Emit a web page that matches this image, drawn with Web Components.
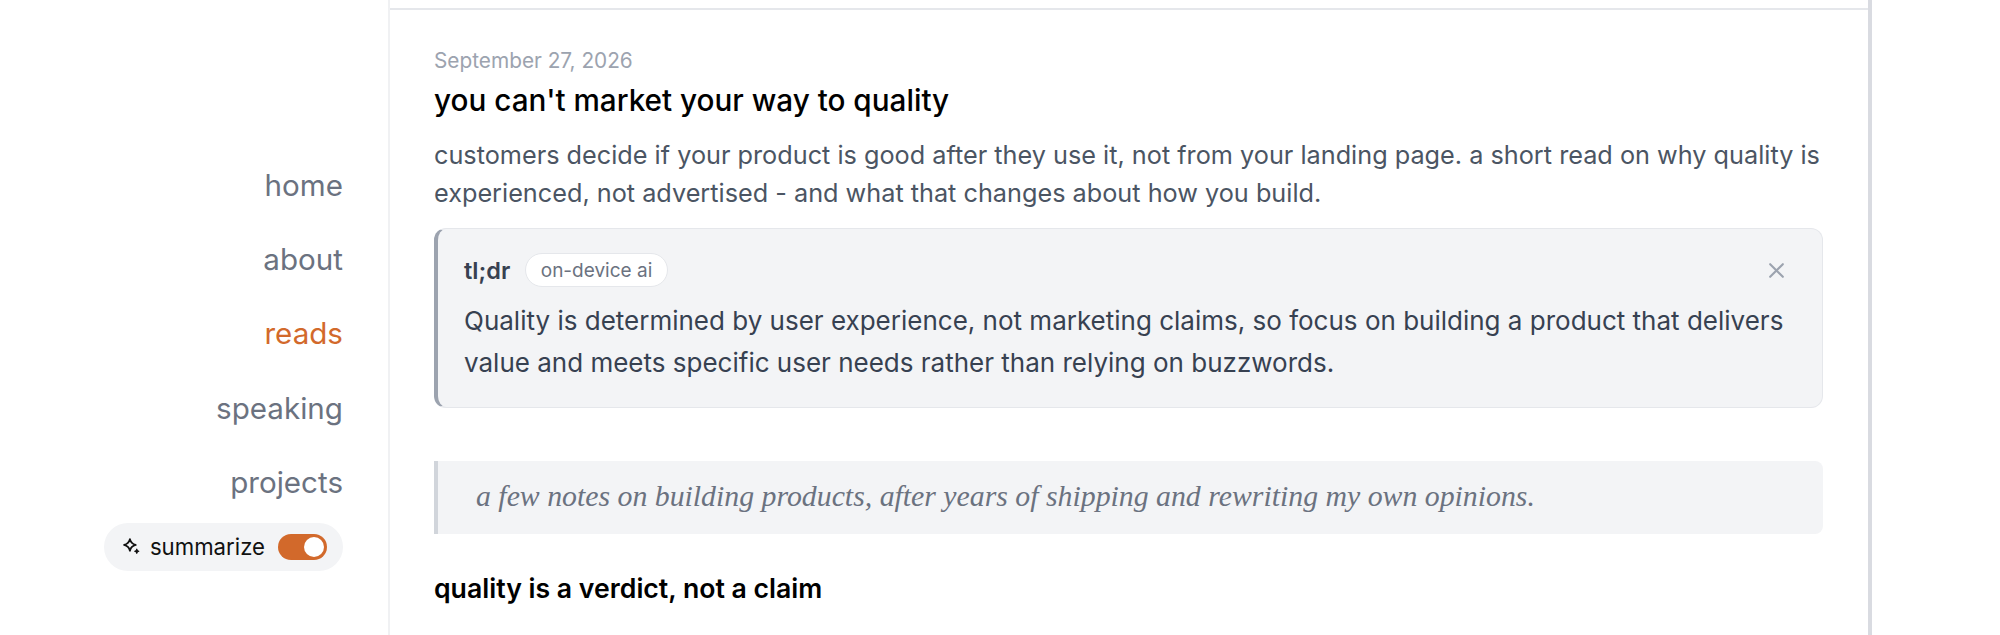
<!DOCTYPE html>
<html lang="en">
<head>
<meta charset="utf-8">
<title>you can't market your way to quality</title>
<style>
  html, body { margin: 0; height: 100%; background: #fff; overflow: hidden; }
  body { font-family: Inter, "Liberation Sans", sans-serif; }
</style>
</head>
<body>
<blog-page>
  <side-nav slot="side">
    <nav-link>home</nav-link>
    <nav-link>about</nav-link>
    <nav-link active>reads</nav-link>
    <nav-link>speaking</nav-link>
    <nav-link>projects</nav-link>
    <summarize-toggle>summarize</summarize-toggle>
  </side-nav>
  <post-header date="September 27, 2026" title="you can't market your way to quality">customers decide if your product is good after they use it, not from your landing page. a short read on why quality is experienced, not advertised - and what that changes about how you build.</post-header>
  <tldr-card>Quality is determined by user experience, not marketing claims, so focus on building a product that delivers value and meets specific user needs rather than relying on buzzwords.</tldr-card>
  <pull-quote>a few notes on building products, after years of shipping and rewriting my own opinions.</pull-quote>
  <section-heading>quality is a verdict, not a claim</section-heading>
</blog-page>

<script>
// small helper so each component is just a template + a class
function component(name, html, setup) {
  const template = document.createElement('template');
  template.innerHTML = html;
  customElements.define(name, class extends HTMLElement {
    connectedCallback() {
      if (this.shadowRoot) return;
      const root = this.attachShadow({ mode: 'open' });
      root.appendChild(template.content.cloneNode(true));
      if (setup) setup(root, this);
    }
  });
}

component('blog-page', `
  <style>
    :host { display: grid; grid-template-columns: 388px 1484px 1fr; height: 635px; }
    aside { display: flex; flex-direction: column; align-items: flex-end; padding: 162px 45px 0 0; }
    main { border-left: 2px solid #f0f1f3; border-right: 4px solid #d9dbe1; overflow: hidden; }
    .rule { height: 8px; border-bottom: 2px solid #e5e7eb; }
    .content { padding: 38px 45px 0 44px; display: flex; flex-direction: column; }
  </style>
  <aside><slot name="side"></slot></aside>
  <main>
    <div class="rule"></div>
    <div class="content"><slot></slot></div>
  </main>
  <div></div>
`);

component('side-nav', `
  <style>
    :host { display: flex; flex-direction: column; align-items: flex-end; gap: 0; }
  </style>
  <slot></slot>
`);

component('nav-link', `
  <style>
    :host { display: block; font-size: 29.6px; line-height: 46px; margin-bottom: 28.2px; color: #6b7280; }
    :host([active]) { color: #d2692b; }
    a { color: inherit; text-decoration: none; }
  </style>
  <a href="#"><slot></slot></a>
`);

component('summarize-toggle', `
  <style>
    :host { display: flex; align-items: center; height: 48px; padding: 0 16px 0 18px; margin-top: -10px;
      background: #f3f4f6; border-radius: 24px; font-size: 22.2px; color: #111; }
    svg { width: 19px; height: 19px; margin-right: 9px; }
    .track { width: 49px; height: 26px; margin-left: 13px; border-radius: 13px; background: #d2692b;
      display: flex; align-items: center; justify-content: flex-end; padding-right: 3px; box-sizing: border-box; }
    .knob { width: 20px; height: 20px; border-radius: 50%; background: #fff; }
  </style>
  <svg viewBox="0 0 18 18" fill="none" stroke="#111" stroke-width="1.7" stroke-linejoin="round">
    <path d="M7.500 2c.8 3.300 2.200 4.700 5.500 5.500-3.300.8-4.700 2.200-5.500 5.500-.8-3.300-2.200-4.700-5.500-5.500 3.300-.8 4.700-2.200 5.500-5.500z"/>
    <path d="M14 11.500c.2 1.200.8 1.800 2 2-1.200.2-1.800.8-2 2-.2-1.200-.8-1.800-2-2 1.200-.2 1.800-.8 2-2z" fill="#111" stroke-width="1"/>
  </svg>
  <span><slot></slot></span>
  <div class="track"><div class="knob"></div></div>
`);

component('post-header', `
  <style>
    :host { display: block; }
    .date { font-size: 20.800px; line-height: 26px; color: #9ca3af; }
    h1 { margin: 6px 0 16px; font-size: 29.700px; line-height: 40px; font-weight: 500; color: #000; }
    p { margin: 0; font-size: 25.250px; line-height: 38px; color: #4b5563; }
  </style>
  <div class="date"></div>
  <h1></h1>
  <p><slot></slot></p>
`, (root, host) => {
  root.querySelector('.date').textContent = host.getAttribute('date');
  root.querySelector('h1').textContent = host.getAttribute('title');
});

component('tldr-card', `
  <style>
    :host { display: block; margin-top: 16px; box-sizing: border-box; height: 180px; padding: 23px 36px 0 26px;
      background: #f3f4f6; border: 1px solid #e5e7eb; border-left: 4px solid #9ca3af; border-radius: 12px; }
    header { display: flex; align-items: center; gap: 15px; height: 36px; }
    b { font-size: 23.500px; font-weight: 600; color: #374151; }
    .chip { height: 34px; box-sizing: border-box; padding: 0 14.500px; display: flex; align-items: center;
      background: #fff; border: 1px solid #e5e7eb; border-radius: 17px; font-size: 19px; color: #6b7280; }
    svg { margin-left: auto; width: 19px; height: 19px; }
    p { margin: 12px 0 0; font-size: 26px; line-height: 42px; color: #374151; }
  </style>
  <header>
    <b>tl;dr</b><span class="chip">on-device ai</span>
    <svg viewBox="0 0 18 18" fill="none" stroke="#9ca3af" stroke-width="2" stroke-linecap="round"><path d="M3 3l12 12M15 3L3 15"/></svg>
  </header>
  <p><slot></slot></p>
`);

component('pull-quote', `
  <style>
    :host { display: block; margin-top: 53px; height: 73px; box-sizing: border-box; padding: 0 0 4px 38px;
      display: flex; align-items: center; background: #f3f4f6; border-left: 4px solid #d1d5db;
      border-radius: 0 8px 8px 0; font: italic 29.800px "Liberation Serif", serif; color: #6b7280; }
  </style>
  <slot></slot>
`);

component('section-heading', `
  <style>
    :host { display: block; margin-top: 37px; font-size: 26.650px; line-height: 34px; font-weight: 600; color: #000; }
  </style>
  <slot></slot>
`);
</script>
</body>
</html>
